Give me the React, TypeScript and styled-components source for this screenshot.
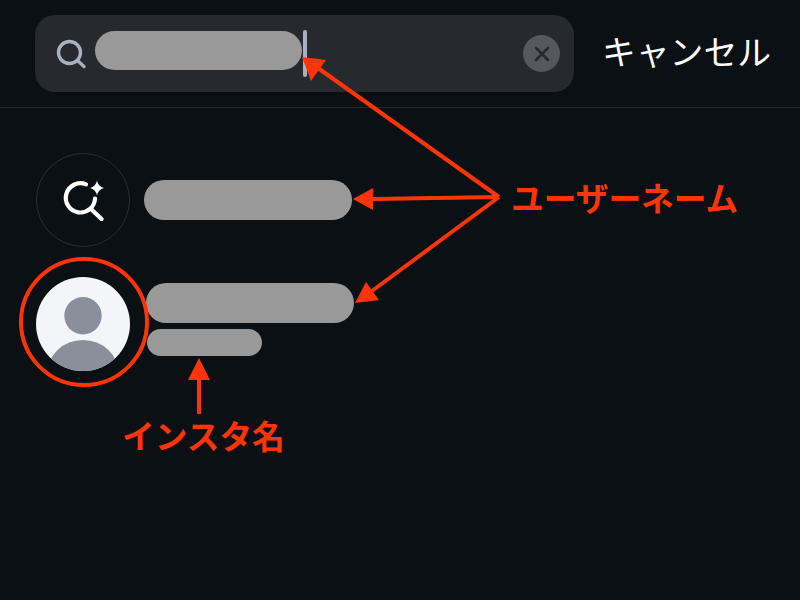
import React from "react";
import styled, { createGlobalStyle } from "styled-components";

const Global = createGlobalStyle`
  html, body { margin: 0; padding: 0; background: #0b1015; }
  body { font-family: "Noto Sans CJK JP", "Noto Sans", sans-serif; }
`;

const Page = styled.div`
  position: relative;
  width: 800px;
  height: 600px;
  overflow: hidden;
  background: #0b1015;
`;

const Header = styled.header`
  box-sizing: border-box;
  height: 108px;
  padding: 15px 0 0 35px;
  display: flex;
  align-items: flex-start;
  gap: 28px;
  border-bottom: 1px solid #24282d;
`;

const SearchBox = styled.div`
  width: 539px;
  height: 77px;
  box-sizing: border-box;
  padding: 0 14px 0 20px;
  display: flex;
  align-items: center;
  border-radius: 20px;
  background: #26292e;
`;

const SearchIcon = styled.svg`
  width: 32px;
  height: 32px;
  flex: none;
`;

const QueryBar = styled.div`
  width: 207px;
  height: 39px;
  margin: 0 0 6px 8px;
  border-radius: 20px;
  background: #999999;
  flex: none;
`;

const Caret = styled.div`
  width: 4px;
  height: 47px;
  margin: 0 0 0 1px;
  border-radius: 2px;
  background: #a9b1bf;
  flex: none;
`;

const ClearButton = styled.div`
  width: 37px;
  height: 37px;
  margin: 0 0 0 auto;
  border-radius: 50%;
  background: #55585d;
  display: flex;
  align-items: center;
  justify-content: center;
`;

const Cancel = styled.span`
  margin-top: 13px;
  font-size: 33.8px;
  line-height: 46px;
  color: #ffffff;
  white-space: nowrap;
`;

const List = styled.div`
  padding: 45px 0 0 36px;
  display: flex;
  flex-direction: column;
  gap: 30px;
`;

const Row = styled.div`
  display: flex;
  align-items: flex-start;
  height: 94px;
`;

const AiCircle = styled.div`
  box-sizing: border-box;
  width: 94px;
  height: 94px;
  flex: none;
  border-radius: 50%;
  border: 1px solid #2a2e33;
  display: flex;
  align-items: center;
  justify-content: center;
`;

const Avatar = styled.svg`
  width: 94px;
  height: 94px;
  flex: none;
`;

const Bars = styled.div<{ $top: number; $left: number }>`
  display: flex;
  flex-direction: column;
  gap: 6px;
  margin: ${(p) => p.$top}px 0 0 ${(p) => p.$left}px;
`;

const NameBar = styled.div`
  width: 208px;
  height: 40px;
  border-radius: 20px;
  background: #999999;
`;

const SubBar = styled.div`
  width: 115px;
  height: 27px;
  margin-left: 1px;
  border-radius: 13.5px;
  background: #999999;
`;

const Overlay = styled.svg`
  position: absolute;
  inset: 0;
  width: 800px;
  height: 600px;
  pointer-events: none;
`;

const Note = styled.span<{ $x: number; $y: number }>`
  position: absolute;
  left: ${(p) => p.$x}px;
  top: ${(p) => p.$y}px;
  font-size: 32.7px;
  line-height: 46px;
  font-weight: 700;
  color: #ff3509;
  white-space: nowrap;
`;

const RED = "#ff3509";

export default function App() {
  return (
    <Page>
      <Global />
      <Header>
        <SearchBox>
          <SearchIcon viewBox="0 0 32 32" fill="none" stroke="#a9b1bf" strokeWidth="3.4" strokeLinecap="round">
            <circle cx="14.5" cy="14.5" r="11" />
            <path d="M22.8 22.8 L29 28.5" />
          </SearchIcon>
          <QueryBar />
          <Caret />
          <ClearButton>
            <svg width="18" height="18" viewBox="0 0 18 18" stroke="#26292e" strokeWidth="2.6" strokeLinecap="round">
              <path d="M3 3 L15 15 M15 3 L3 15" />
            </svg>
          </ClearButton>
        </SearchBox>
        <Cancel>キャンセル</Cancel>
      </Header>
      <List>
        <Row>
          <AiCircle>
            <svg width="42" height="42" viewBox="0 0 42 42" fill="none">
              <path
                d="M24 5.4 A14.6 14.6 0 1 0 33 19.5"
                stroke="#fff"
                strokeWidth="4.2"
                strokeLinecap="round"
              />
              <path d="M29.5 30.5 L39.5 40" stroke="#fff" strokeWidth="4.2" strokeLinecap="round" />
              <path d="M35 1.5 Q36 7.5 42 9 Q36 10.5 35 16.5 Q34 10.5 28 9 Q34 7.5 35 1.5 Z" fill="#fff" />
            </svg>
          </AiCircle>
          <Bars $top={27} $left={14}>
            <NameBar />
          </Bars>
        </Row>
        <Row>
          <Avatar viewBox="0 0 94 94">
            <defs>
              <clipPath id="avatar-clip">
                <circle cx="47" cy="47" r="47" />
              </clipPath>
            </defs>
            <circle cx="47" cy="47" r="47" fill="#f4f5f8" />
            <g clipPath="url(#avatar-clip)" fill="#8a8f9b">
              <circle cx="47" cy="38.7" r="18.7" />
              <ellipse cx="47" cy="97" rx="36" ry="34" />
            </g>
          </Avatar>
          <Bars $top={6} $left={16}>
            <NameBar />
            <SubBar />
          </Bars>
        </Row>
      </List>
      <Overlay viewBox="0 0 800 600" fill="none">
        <circle cx="84" cy="322" r="63" stroke={RED} strokeWidth="4" />
        <g stroke={RED} strokeWidth="4">
          <path d="M499 197 L318 68" />
          <path d="M499 197 L372 199" />
          <path d="M499 197 L372 291" />
          <path d="M199 414 L199 376" />
        </g>
        <g fill={RED}>
          <path d="M302 57 L326 60 L311 81 Z" />
          <path d="M353 199 L373 188 L373 210 Z" />
          <path d="M355 303 L366 282 L379 300 Z" />
          <path d="M199 358 L210 380 L188 380 Z" />
        </g>
      </Overlay>
      <Note $x={511} $y={174}>ユーザーネーム</Note>
      <Note $x={122} $y={412}>インスタ名</Note>
    </Page>
  );
}
